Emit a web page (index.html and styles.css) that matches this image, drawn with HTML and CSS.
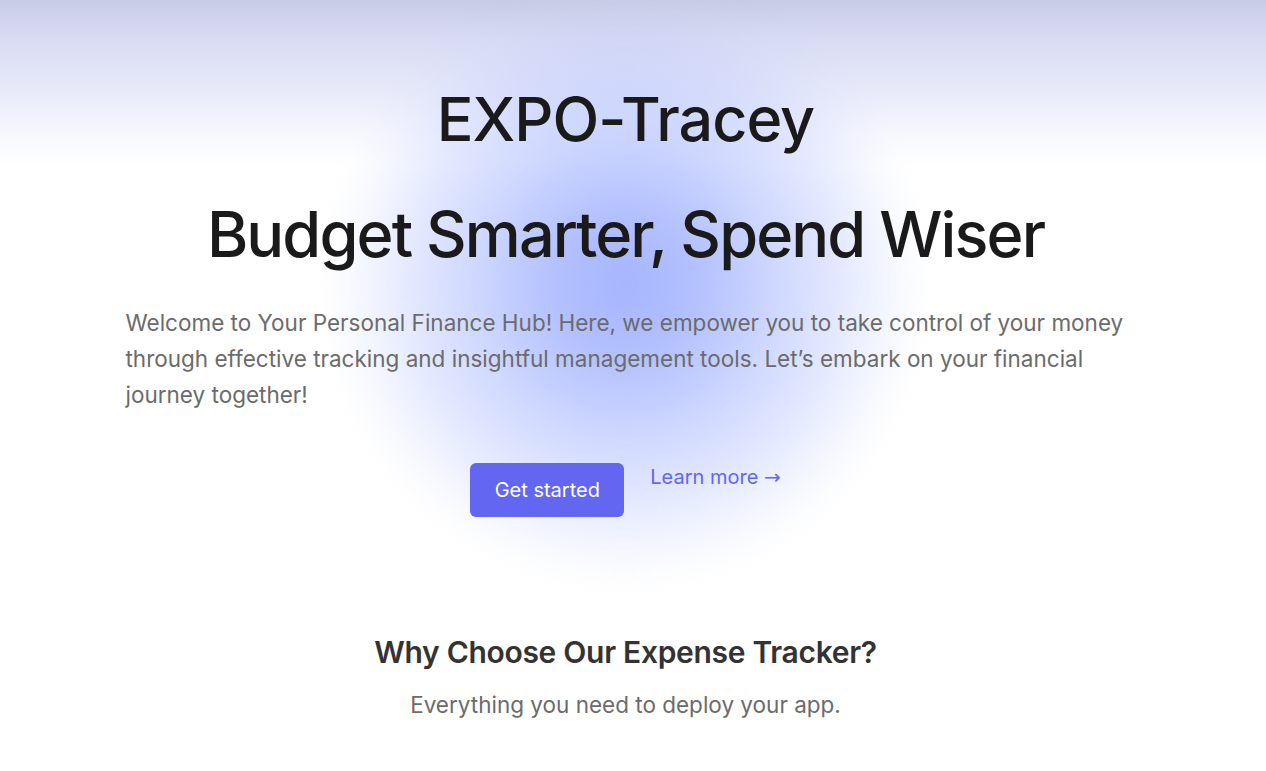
FILE: index.html
```html
<!DOCTYPE html>
<html lang="en">
<head>
<meta charset="utf-8">
<title>EXPO-Tracey</title>
<link rel="stylesheet" href="styles.css">
</head>
<body>
<main class="page">
  <section class="hero">
    <div class="blob"></div>
    <div class="hero-inner">
      <h1 class="brand">EXPO-Tracey</h1>
      <h2 class="headline">Budget Smarter, Spend Wiser</h2>
      <p class="intro">Welcome to Your Personal Finance Hub! Here, we empower you to take control of your money through effective tracking and insightful management tools. Let’s embark on your financial journey together!</p>
      <div class="actions">
        <a class="btn-primary" href="#">Get started</a>
        <a class="link" href="#">Learn more <span class="arrow">→</span></a>
      </div>
    </div>
  </section>
  <section class="features">
    <h3 class="features-title">Why Choose Our Expense Tracker?</h3>
    <p class="features-sub">Everything you need to deploy your app.</p>
  </section>
</main>
</body>
</html>
```

FILE: styles.css
```css
* { box-sizing: border-box; }
html, body { margin: 0; padding: 0; }
body {
  font-family: Inter, "Noto Sans", sans-serif;
  background: #fff;
  color: #1a1a1a;
}
.page {
  background: linear-gradient(180deg, #c8cbe5 0px, #d9dcf3 40px, #e9ebfa 95px, #f7f8fe 135px, #ffffff 165px);
  min-height: 771px;
  overflow: hidden;
  padding-right: 15px;
}
.hero {
  position: relative;
  padding-top: 83px;
}
.blob {
  position: absolute;
  left: 320px;
  top: -20px;
  width: 610px;
  height: 610px;
  border-radius: 50%;
  background: radial-gradient(closest-side,
    rgba(165,180,255,1) 0%,
    rgba(170,185,255,0.88) 25%,
    rgba(175,190,255,0.6) 50%,
    rgba(185,198,255,0.33) 75%,
    rgba(200,210,255,0.12) 90%,
    rgba(210,218,255,0) 100%);
  filter: blur(10px);
  pointer-events: none;
}
.hero-inner {
  position: relative;
  max-width: 1024px;
  padding: 0 12px;
  margin: 0 auto;
}
.brand {
  margin: 0;
  text-align: center;
  font-size: 61px;
  line-height: 73px;
  font-weight: 500;
  letter-spacing: -1px;
  color: #1a1a1a;
}
.headline {
  margin: 40px 0 0;
  text-align: center;
  font-size: 63px;
  line-height: 76px;
  font-weight: 500;
  letter-spacing: -1.9px;
  color: #1a1a1a;
}
.intro {
  margin: 33px 0 0;
  font-size: 22.5px;
  line-height: 36px;
  color: #6b6b6b;
}
.actions {
  margin-top: 50px;
  display: flex;
  justify-content: center;
  align-items: flex-start;
  gap: 26px;
}
.btn-primary {
  display: inline-flex;
  align-items: center;
  justify-content: center;
  width: 154px;
  height: 54px;
  background: #6366f1;
  color: #fff;
  font-size: 20px;
  border-radius: 6px;
  text-decoration: none;
}
.link {
  color: #6366f1;
  font-size: 20px;
  line-height: 28px;
  text-decoration: none;
}
.arrow {
  font-family: "Noto Sans", "DejaVu Sans", sans-serif;
}
.features {
  padding-top: 115px;
  text-align: center;
}
.features-title {
  margin: 0;
  font-size: 30px;
  line-height: 40px;
  font-weight: 600;
  letter-spacing: -0.3px;
  color: #333;
}
.features-sub {
  margin: 17px 0 0;
  font-size: 22.5px;
  line-height: 32px;
  color: #6b6b6b;
}
```
